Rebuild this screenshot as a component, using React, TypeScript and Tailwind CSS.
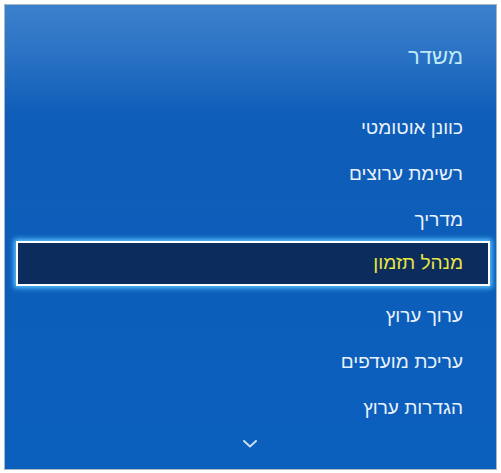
import React from "react";

const items = [
  "כוונן אוטומטי",
  "רשימת ערוצים",
  "מדריך",
  "מנהל תזמון",
  "ערוך ערוץ",
  "עריכת מועדפים",
  "הגדרות ערוץ",
];

const selected = 3;

const App = () => {
  return (
    <div className="w-[501px] h-[473px] bg-white pt-[4px] pl-[4px] pr-[4px] pb-[3px]">
      <div
        dir="rtl"
        className="h-[466px] border border-[#a9b6c4] bg-[linear-gradient(180deg,#3c80cc_0px,#2a72c4_50px,#0e5db8_110px,#0b5fbd_466px)] flex flex-col font-['Liberation_Sans','DejaVu_Sans',sans-serif]"
      >
        <div className="h-[100px] pt-[38px] pr-[33px] text-[22px] leading-[28px] text-[#bfe9f7]">
          משדר
        </div>
        {items.map((item, i) =>
          i === selected ? (
            <div
              key={item}
              className="-mt-[2px] mb-[7px] mr-[6px] ml-[11px] h-[45px] border-2 border-white bg-[#0b2c5c] shadow-[0_0_5px_2px_#5cc6ff] flex items-center pr-[25px] text-[19px] text-[#ece640]"
            >
              {item}
            </div>
          ) : (
            <div
              key={item}
              className="h-[46px] flex items-center pr-[33px] text-[19px] text-[#eaf2fb]"
            >
              {item}
            </div>
          )
        )}
        <div className="flex justify-center pt-[9px]">
          <svg width="14" height="8" viewBox="0 0 14 8" className="mr-[2px]">
            <path d="M1 1 L7 6.5 L13 1" fill="none" stroke="#c9dcf2" strokeWidth="2" strokeLinecap="round" strokeLinejoin="round" />
          </svg>
        </div>
      </div>
    </div>
  );
};

export default App;
